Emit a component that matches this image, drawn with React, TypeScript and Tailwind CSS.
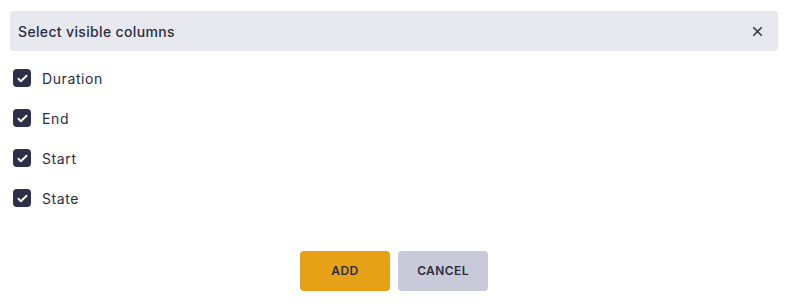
import { X } from "lucide-react";

const columns = ["Duration", "End", "Start", "State"];

function CheckIcon() {
  return (
    <span className="flex h-[18px] w-[18px] items-center justify-center rounded-[4px] bg-[#2e3049]">
      <svg width="13" height="13" viewBox="0 0 24 24" fill="none" stroke="white" strokeWidth="3.5" strokeLinecap="round" strokeLinejoin="round">
        <path d="M4.5 12.5l4.5 4.5L19.5 7" />
      </svg>
    </span>
  );
}

export default function App() {
  return (
    <div className="h-[306px] w-[786px] bg-white pl-[10px] pr-[8px] pt-[11px] text-[#2b2d42]" style={{ fontFamily: "Inter, 'Noto Sans', sans-serif" }}>
      <div className="flex h-[40px] items-center justify-between rounded-[4px] bg-[#e8e9ef] pl-[8px] pr-[13px]">
        <span className="text-[14px] font-medium tracking-[0.35px]">Select visible columns</span>
        <X size={15} strokeWidth={2.75} className="text-[#3a3d55]" />
      </div>

      <div className="mt-[7px] flex flex-col">
        {columns.map((c) => (
          <label key={c} className="flex h-[40px] items-center gap-[11px] pl-[3px]">
            <CheckIcon />
            <span className="text-[14px] tracking-[0.6px]">{c}</span>
          </label>
        ))}
      </div>

      <div className="mt-[33px] flex justify-center gap-[8px] pr-[0px]">
        <button className="h-[40px] w-[90px] rounded-[4px] bg-[#e6a117] text-[12px] font-semibold tracking-[0.4px] text-[#2b2d42]">
          ADD
        </button>
        <button className="h-[40px] w-[90px] rounded-[4px] bg-[#c8cad9] text-[12px] font-semibold tracking-[0.4px] text-[#2b2d42]">
          CANCEL
        </button>
      </div>
    </div>
  );
}
